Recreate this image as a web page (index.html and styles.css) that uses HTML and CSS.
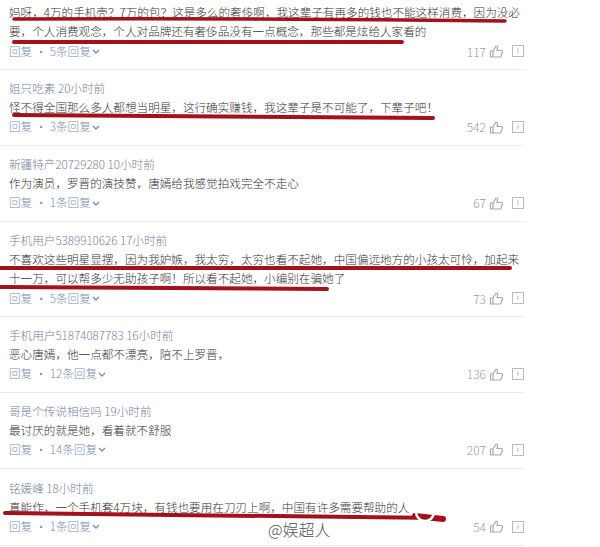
FILE: index.html
```html
<!DOCTYPE html>
<html lang="zh-CN">

<head>
    <meta charset="utf-8">
    <title>评论</title>
    <link rel="stylesheet" href="styles.css">
</head>

<body>
    <section class="liste">

        <article class="kommentar forste">
            <p class="tekst">妈呀，4万的手机壳？7万的包？这是多么的奢侈啊，我这辈子有再多的钱也不能这样消费，因为没必<br>要，个人消费观念，个人对品牌还有奢侈品没有一点概念，那些都是炫给人家看的</p>
            <div class="handling">
                <span class="svar">回复<span class="prik">·</span>5条回复<svg class="pil" width="8" height="5" viewBox="0 0 8 5"><polyline points="1,1 4,4 7,1" /></svg></span>
                <span class="hoejre">117<svg class="tommel" width="15" height="13" viewBox="0 0 15 13"><path d="M1.5 6h2.5v6H1.5z M4 6l3-4.8c1.1 0 1.9.9 1.5 2.2L8 5.5h4.3c.9 0 1.4.9 1.1 1.7l-1.5 4c-.2.5-.6.8-1.2.8H4" /></svg><svg class="boks" width="12" height="12" viewBox="0 0 12 12"><rect x=".5" y=".5" width="11" height="11" /><line x1="6" y1="3.5" x2="6" y2="8" /></svg></span>
            </div>
        </article>

        <article class="kommentar">
            <p class="navn">姐只吃素 20小时前</p>
            <p class="tekst">怪不得全国那么多人都想当明星，这行确实赚钱，我这辈子是不可能了，下辈子吧！</p>
            <div class="handling">
                <span class="svar">回复<span class="prik">·</span>3条回复<svg class="pil" width="8" height="5" viewBox="0 0 8 5"><polyline points="1,1 4,4 7,1" /></svg></span>
                <span class="hoejre">542<svg class="tommel" width="15" height="13" viewBox="0 0 15 13"><path d="M1.5 6h2.5v6H1.5z M4 6l3-4.8c1.1 0 1.9.9 1.5 2.2L8 5.5h4.3c.9 0 1.4.9 1.1 1.7l-1.5 4c-.2.5-.6.8-1.2.8H4" /></svg><svg class="boks" width="12" height="12" viewBox="0 0 12 12"><rect x=".5" y=".5" width="11" height="11" /><line x1="6" y1="3.5" x2="6" y2="8" /></svg></span>
            </div>
        </article>

        <article class="kommentar">
            <p class="navn">新疆特产20729280 10小时前</p>
            <p class="tekst">作为演员，罗晋的演技赞，唐嫣给我感觉拍戏完全不走心</p>
            <div class="handling">
                <span class="svar">回复<span class="prik">·</span>1条回复<svg class="pil" width="8" height="5" viewBox="0 0 8 5"><polyline points="1,1 4,4 7,1" /></svg></span>
                <span class="hoejre">67<svg class="tommel" width="15" height="13" viewBox="0 0 15 13"><path d="M1.5 6h2.5v6H1.5z M4 6l3-4.8c1.1 0 1.9.9 1.5 2.2L8 5.5h4.3c.9 0 1.4.9 1.1 1.7l-1.5 4c-.2.5-.6.8-1.2.8H4" /></svg><svg class="boks" width="12" height="12" viewBox="0 0 12 12"><rect x=".5" y=".5" width="11" height="11" /><line x1="6" y1="3.5" x2="6" y2="8" /></svg></span>
            </div>
        </article>

        <article class="kommentar">
            <p class="navn">手机用户5389910626 17小时前</p>
            <p class="tekst">不喜欢这些明星显摆，因为我妒嫉，我太穷，太穷也看不起她，中国偏远地方的小孩太可怜，加起来<br>十一万，可以帮多少无助孩子啊！所以看不起她，小编别在骗她了</p>
            <div class="handling">
                <span class="svar">回复<span class="prik">·</span>5条回复<svg class="pil" width="8" height="5" viewBox="0 0 8 5"><polyline points="1,1 4,4 7,1" /></svg></span>
                <span class="hoejre">73<svg class="tommel" width="15" height="13" viewBox="0 0 15 13"><path d="M1.5 6h2.5v6H1.5z M4 6l3-4.8c1.1 0 1.9.9 1.5 2.2L8 5.5h4.3c.9 0 1.4.9 1.1 1.7l-1.5 4c-.2.5-.6.8-1.2.8H4" /></svg><svg class="boks" width="12" height="12" viewBox="0 0 12 12"><rect x=".5" y=".5" width="11" height="11" /><line x1="6" y1="3.5" x2="6" y2="8" /></svg></span>
            </div>
        </article>

        <article class="kommentar">
            <p class="navn">手机用户51874087783 16小时前</p>
            <p class="tekst">恶心唐嫣，他一点都不漂亮，陪不上罗晋，</p>
            <div class="handling">
                <span class="svar">回复<span class="prik">·</span>12条回复<svg class="pil" width="8" height="5" viewBox="0 0 8 5"><polyline points="1,1 4,4 7,1" /></svg></span>
                <span class="hoejre">136<svg class="tommel" width="15" height="13" viewBox="0 0 15 13"><path d="M1.5 6h2.5v6H1.5z M4 6l3-4.8c1.1 0 1.9.9 1.5 2.2L8 5.5h4.3c.9 0 1.4.9 1.1 1.7l-1.5 4c-.2.5-.6.8-1.2.8H4" /></svg><svg class="boks" width="12" height="12" viewBox="0 0 12 12"><rect x=".5" y=".5" width="11" height="11" /><line x1="6" y1="3.5" x2="6" y2="8" /></svg></span>
            </div>
        </article>

        <article class="kommentar">
            <p class="navn">哥是个传说相信吗 19小时前</p>
            <p class="tekst">最讨厌的就是她，看着就不舒服</p>
            <div class="handling">
                <span class="svar">回复<span class="prik">·</span>14条回复<svg class="pil" width="8" height="5" viewBox="0 0 8 5"><polyline points="1,1 4,4 7,1" /></svg></span>
                <span class="hoejre">207<svg class="tommel" width="15" height="13" viewBox="0 0 15 13"><path d="M1.5 6h2.5v6H1.5z M4 6l3-4.8c1.1 0 1.9.9 1.5 2.2L8 5.5h4.3c.9 0 1.4.9 1.1 1.7l-1.5 4c-.2.5-.6.8-1.2.8H4" /></svg><svg class="boks" width="12" height="12" viewBox="0 0 12 12"><rect x=".5" y=".5" width="11" height="11" /><line x1="6" y1="3.5" x2="6" y2="8" /></svg></span>
            </div>
        </article>

        <article class="kommentar">
            <p class="navn">铭媛峰 18小时前</p>
            <p class="tekst">真能作，一个手机套4万块，有钱也要用在刀刃上啊，中国有许多需要帮助的人</p>
            <div class="handling">
                <span class="svar">回复<span class="prik">·</span>1条回复<svg class="pil" width="8" height="5" viewBox="0 0 8 5"><polyline points="1,1 4,4 7,1" /></svg></span>
                <span class="hoejre">54<svg class="tommel" width="15" height="13" viewBox="0 0 15 13"><path d="M1.5 6h2.5v6H1.5z M4 6l3-4.8c1.1 0 1.9.9 1.5 2.2L8 5.5h4.3c.9 0 1.4.9 1.1 1.7l-1.5 4c-.2.5-.6.8-1.2.8H4" /></svg><svg class="boks" width="12" height="12" viewBox="0 0 12 12"><rect x=".5" y=".5" width="11" height="11" /><line x1="6" y1="3.5" x2="6" y2="8" /></svg></span>
            </div>
        </article>

    </section>

    <!-- røde streger tegnet ovenpå -->
    <svg class="streger" width="600" height="547" viewBox="0 0 600 547">
        <path d="M14 19 Q 260 18 505 21" stroke-width="3.5" />
        <path d="M14 42 L 402 42" stroke-width="4" />
        <path d="M14 115 Q 220 116 433 118" stroke-width="4" />
        <path d="M1 268 L 510 268" stroke-width="4" />
        <path d="M1 287 L 327 289" stroke-width="4" />
        <path d="M5 513 Q 200 515 440 518" stroke-width="4" />
        <path d="M415 516 L 443 519" stroke-width="6" />
        <path class="ring" d="M416 512 A 9 9 0 0 0 434 512" />
    </svg>

    <div class="vandmaerke">@娱超人</div>
</body>

</html>
```

FILE: styles.css
```css
* {
    margin: 0;
    padding: 0;
    box-sizing: border-box;
}

body {
    font-family: "Noto Sans CJK SC", "Noto Sans", sans-serif;
    font-size: 11.6px;
    line-height: 19.3px;
    font-weight: 300;
    color: #333;
    background: #fff;
    width: 600px;
    height: 547px;
    overflow: hidden;
    position: relative;
}

.liste {
    width: 524px;
}

.kommentar {
    padding: 9px 0 8px 9px;
    border-bottom: 1px solid #ececec;
}

.kommentar:last-child {
    padding-top: 10px;
}

.forste {
    padding-top: 3px;
}

.navn {
    color: #75829b;
}

.tekst {
    color: #333;
}

/* Svar linje */
.handling {
    display: flex;
    justify-content: space-between;
    align-items: center;
    height: 19.3px;
    color: #7a8eb0;
}

.svar {
    display: flex;
    align-items: center;
}

.prik {
    margin: 0 3px;
}

.pil {
    margin-left: 1px;
    fill: none;
    stroke: #7a8eb0;
    stroke-width: 1.4;
}

.hoejre {
    display: flex;
    align-items: center;
    color: #999;
    font-size: 12px;
}

.tommel {
    margin-left: 3px;
    fill: none;
    stroke: #aaa;
    stroke-width: 1.2;
}

.boks {
    margin-left: 8px;
    fill: none;
    stroke: #bbb;
    stroke-width: 1;
}

/* Røde markeringer */
.streger {
    position: absolute;
    top: 0;
    left: 0;
    pointer-events: none;
}

.streger path {
    fill: none;
    stroke: #a3121c;
    stroke-linecap: round;
}

.streger .ring {
    stroke: #fff;
    stroke-width: 2.5;
}

.vandmaerke {
    position: absolute;
    left: 268px;
    top: 519px;
    font-size: 16px;
    line-height: 20px;
    color: #555;
    text-shadow: 0 0 2px #fff;
}
```
